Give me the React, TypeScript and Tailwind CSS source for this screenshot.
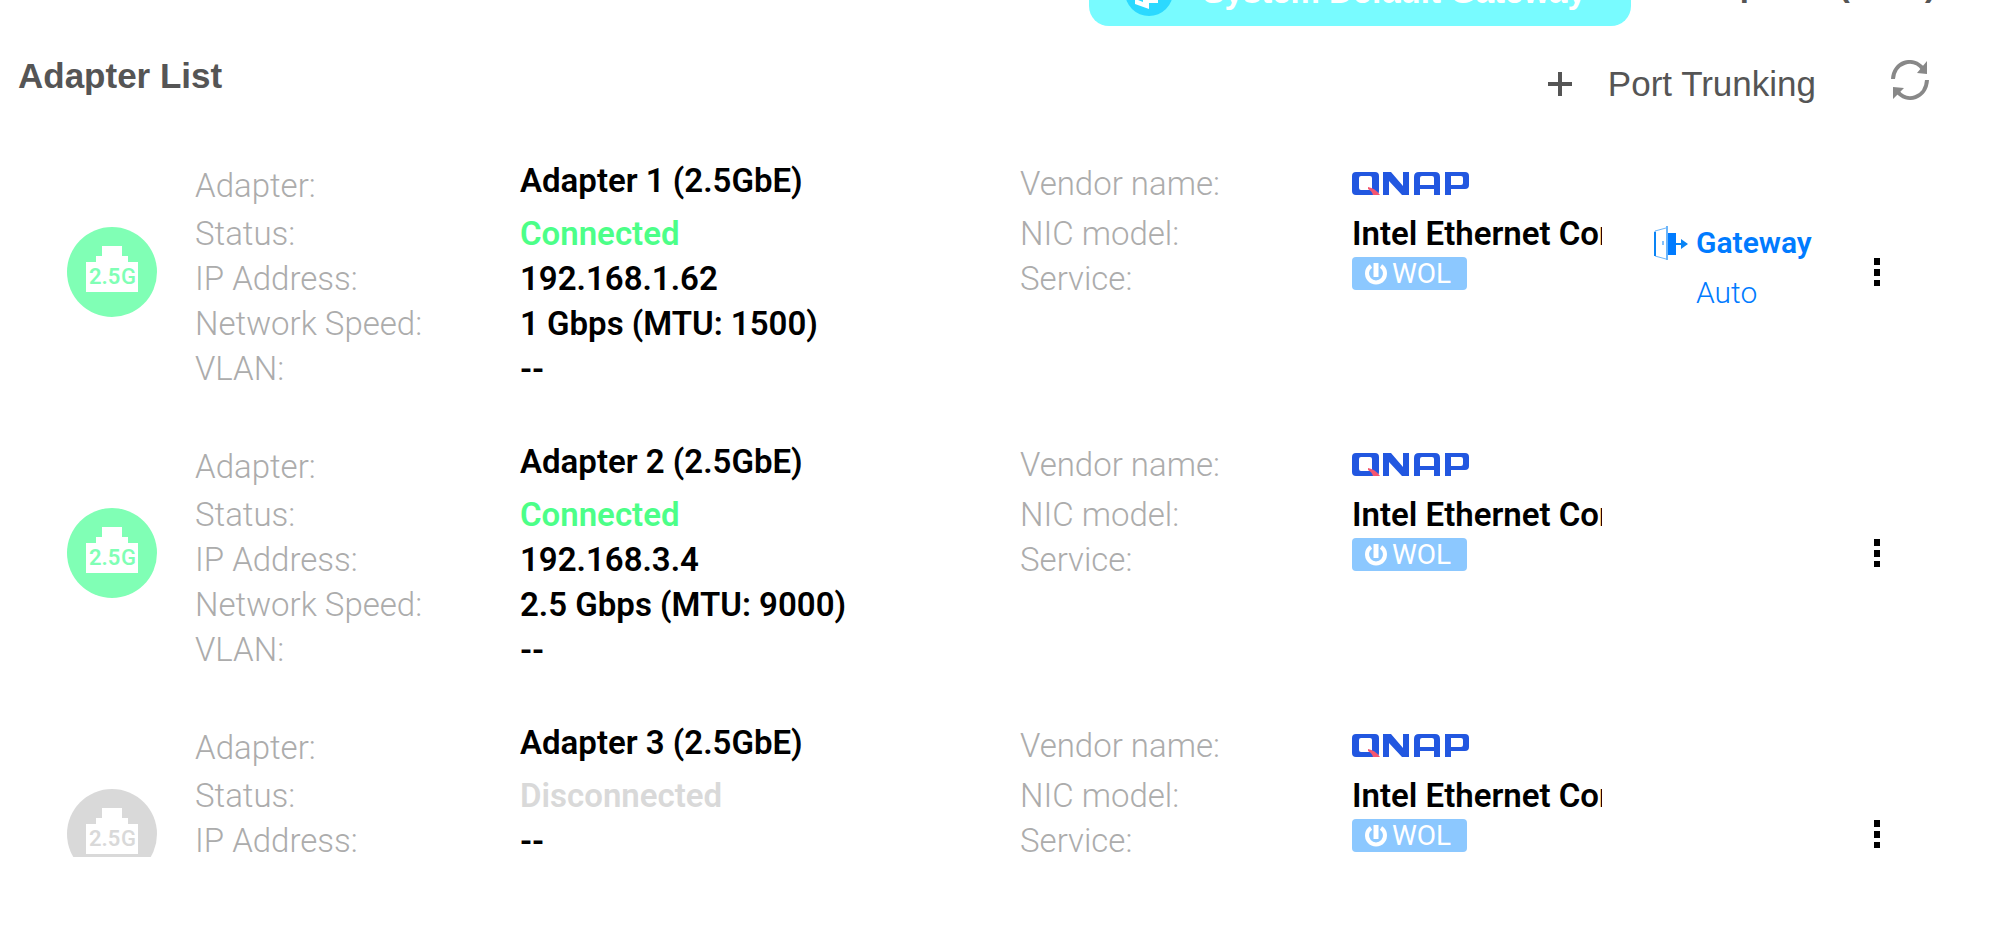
interface Adapter {
  readonly id: number;
  readonly name: string;
  readonly connected: boolean;
  readonly ip: string;
  readonly speed: string;
  readonly gateway?: string;
}

const adapters: Adapter[] = [
  {
    id: 1,
    name: "Adapter 1 (2.5GbE)",
    connected: true,
    ip: "192.168.1.62",
    speed: "1 Gbps (MTU: 1500)",
    gateway: "Auto",
  },
  {
    id: 2,
    name: "Adapter 2 (2.5GbE)",
    connected: true,
    ip: "192.168.3.4",
    speed: "2.5 Gbps (MTU: 9000)",
  },
  {
    id: 3,
    name: "Adapter 3 (2.5GbE)",
    connected: false,
    ip: "--",
    speed: "--",
  },
];

const PortIcon = ({ connected }: { connected: boolean }) => (
  <svg
    viewBox="0 0 90 90"
    className={`h-[90px] w-[90px] ${connected ? "text-[#80ffb5]" : "text-[#d9d9d9]"}`}
    fill="currentColor"
    fontFamily="Roboto"
    fontSize="22"
  >
    <circle cx="45" cy="45" r="45" />
    <path d="M35 19h20v10h6v6h10v30H19V35h10v-6h6z" fill="#fff" />
    <text x="22" y="57" fontWeight="600">
      2.5
    </text>
    <text x="54" y="57" fontWeight="500">
      G
    </text>
  </svg>
);

const QnapLogo = () => (
  <svg
    viewBox="0 0 118 24"
    className="h-6 w-[118px]"
    role="img"
    aria-label="QNAP"
    fill="#2257e0"
    fillRule="evenodd"
  >
    <path d="M4 1h19q4 0 4 4v15q0 4-4 4H4q-4 0-4-4V5q0-4 4-4zM9 5q-2 0-2 2v10q0 2 2 2h9q2 0 2-2V7q0-2-2-2z" />
    <path d="M31 24V1h8l12 14V1h6v23h-7L37 10v14z" />
    <path d="M62 24V6q0-5 5-5h16q5 0 5 5v18h-6v-6H68v6zM68 14h14V7q0-2-2-2H70q-2 0-2 2z" />
    <path d="M93 24V1h20q4 0 4 4v9q0 4-4 4H99v6zM99 14h10q2 0 2-2V7q0-2-2-2H99z" />
    <path d="M16 16q7 1 12 8h-7q-1-4-5-6z" fill="#f5566f" />
  </svg>
);

const RefreshIcon = () => (
  <svg viewBox="0 0 38 40" className="h-10 w-[38px]" fill="none" stroke="#888">
    <path d="M2 19C3 2 22-4 32 9" strokeWidth="4" />
    <path d="M36 20C35 38 16 44 6 31" strokeWidth="4" />
    <path d="M36 1v13l-10-1zM2 39V27l11 1z" fill="#888" stroke="none" />
  </svg>
);

const GatewayIcon = () => (
  <svg viewBox="0 0 34 36" className="h-9 w-[34px]" fill="none" stroke="#0a84f5">
    <path d="M12 3L1 6v25l11 3" strokeWidth="1" opacity=".6" />
    <path d="M1 7v24" strokeWidth="2" />
    <path d="M13 1v34" strokeWidth="2" opacity=".6" />
    <rect x="14" y="8" width="8" height="22" fill="#007bff" stroke="none" />
    <path d="M9 16v4" strokeWidth="1" />
    <path d="M22 19h7" strokeWidth="2" />
    <path d="M27 14l7 5-7 5z" fill="#0a84f5" stroke="none" />
  </svg>
);

const WolBadge = () => (
  <span className="mt-px flex h-[33px] w-[115px] items-center gap-1 rounded bg-[#8cc8ff] pl-3 text-[28px] leading-8 text-white">
    <svg viewBox="0 0 24 24" className="h-6 w-6" fill="none" stroke="#fff">
      <path d="M7 4a9 9 0 1 0 10 0" strokeWidth="4" />
      <path d="M12 1v14" strokeWidth="5" />
    </svg>
    WOL
  </span>
);

const AdapterRow = ({ adapter }: { adapter: Adapter }) => (
  <li className="grid h-[281px] shrink-0 grid-cols-[195px_325fr_500fr_332fr_250fr_52px_200fr_146px] pt-[26px] text-[33px] leading-[45px]">
    <div className="pt-[69px] pl-[67px]">
      <PortIcon connected={adapter.connected} />
    </div>

    <div className="font-light text-[#acacac]">
      <p className="pt-[5px] pb-[3px]">Adapter:</p>
      <p>Status:</p>
      <p>IP Address:</p>
      <p>Network Speed:</p>
      <p>VLAN:</p>
    </div>

    <div className="font-semibold text-black">
      <p className="pb-2">{adapter.name}</p>
      <p className={adapter.connected ? "text-[#4cff88]" : "text-[#d9d9d9]"}>
        {adapter.connected ? "Connected" : "Disconnected"}
      </p>
      <p>{adapter.ip}</p>
      <p>{adapter.speed}</p>
      <p>--</p>
    </div>

    <div className="font-light text-[#acacac]">
      <p className="pt-[3px] pb-[5px]">Vendor name:</p>
      <p>NIC model:</p>
      <p>Service:</p>
    </div>

    <div className="min-w-0">
      <div className="flex h-[53px] items-center pb-[3px]">
        <QnapLogo />
      </div>
      <p className="overflow-hidden font-semibold whitespace-nowrap text-black">
        Intel Ethernet Controller
      </p>
      <WolBadge />
    </div>

    <div />

    <div className="pt-[60px] text-[30px] leading-[50px] text-[#007bff]">
      {adapter.gateway && (
        <>
          <div className="flex items-center gap-2 font-semibold">
            <GatewayIcon />
            Gateway
          </div>
          <p className="pl-[42px] font-light">{adapter.gateway}</p>
        </>
      )}
    </div>

    <div className="pt-[99px] pl-[19px]">
      <button aria-label={`${adapter.name} menu`} className="block">
        <svg viewBox="0 0 8 30" className="h-[30px] w-2">
          <path d="M1 1h6v7H1zM1 12h6v7H1zM1 23h6v6H1z" />
        </svg>
      </button>
    </div>
  </li>
);

const App = () => (
  <div className="flex h-screen flex-col overflow-hidden bg-white pb-[72px] font-['Roboto',sans-serif]">
    <header className="flex h-[26px] shrink-0 items-end justify-end gap-[47px] pr-16 font-['Liberation_Sans',sans-serif] text-[33px] leading-[54px] font-bold">
      <div className="flex h-[68px] w-[542px] items-center gap-[30px] rounded-[20px] bg-[#78fbff] pl-9 text-white">
        <svg viewBox="0 0 48 48" className="h-12 w-12 shrink-0">
          <circle cx="24" cy="24" r="24" fill="#2bd9ff" />
          <path d="M10 10h23v25h-9v6l-14-5z" fill="#fff" />
          <path d="M25 14h5v17h-5zM13 32l5 2v-3z" fill="#2bd9ff" />
        </svg>
        System Default Gateway
      </div>
      <span className="h-[68px] text-[#555]">Adapter 1 (Auto)</span>
    </header>

    <div className="flex h-[106px] shrink-0 items-start justify-between pr-[71px] pl-[18px] font-['Liberation_Sans',sans-serif] text-[#555]">
      <h1 className="pt-[26px] text-[35px] leading-[48px] font-bold">
        Adapter List
      </h1>
      <div className="flex items-start gap-[75px] pt-[30px]">
        <button className="flex items-center gap-9 text-[35px] leading-[56px]">
          <svg viewBox="0 0 24 24" className="h-6 w-6" stroke="#555">
            <path d="M12 0v24M0 12h24" strokeWidth="4" />
          </svg>
          Port Trunking
        </button>
        <button aria-label="Refresh" className="pt-1">
          <RefreshIcon />
        </button>
      </div>
    </div>

    <ul className="flex min-h-0 flex-1 flex-col overflow-hidden">
      {adapters.map((adapter) => (
        <AdapterRow key={adapter.id} adapter={adapter} />
      ))}
    </ul>
  </div>
);

export default App;
